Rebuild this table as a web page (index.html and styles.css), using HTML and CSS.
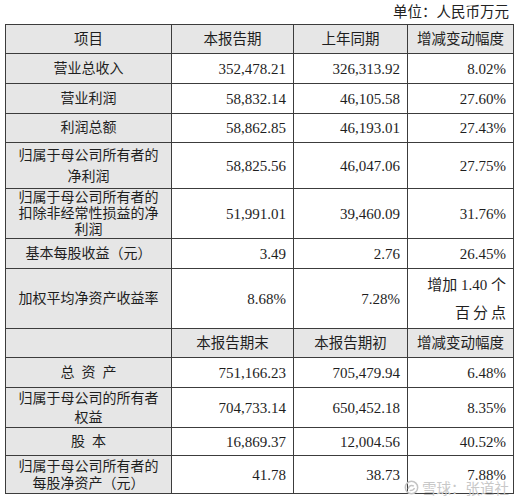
FILE: index.html
```html
<!DOCTYPE html>
<html lang="zh">
<head>
<meta charset="utf-8">
<link rel="stylesheet" href="styles.css">
</head>
<body>
<div class="page">
  <div class="unit">单位：人民币万元</div>
  <table class="fin">
    <colgroup>
      <col class="c1"><col class="c2"><col class="c3"><col class="c4">
    </colgroup>
    <tr class="head h29">
      <td class="ctr">项目</td>
      <td class="ctr">本报告期</td>
      <td class="ctr">上年同期</td>
      <td class="ctr">增减变动幅度</td>
    </tr>
    <tr class="h30">
      <td class="lab">营业总收入</td><td class="num">352,478.21</td><td class="num">326,313.92</td><td class="num">8.02%</td>
    </tr>
    <tr class="h30">
      <td class="lab">营业利润</td><td class="num">58,832.14</td><td class="num">46,105.58</td><td class="num">27.60%</td>
    </tr>
    <tr class="h29">
      <td class="lab">利润总额</td><td class="num">58,862.85</td><td class="num">46,193.01</td><td class="num">27.43%</td>
    </tr>
    <tr class="h46">
      <td class="lab lh21">归属于母公司所有者的<br>净利润</td><td class="num">58,825.56</td><td class="num">46,047.06</td><td class="num">27.75%</td>
    </tr>
    <tr class="h50">
      <td class="lab lh16">归属于母公司所有者的<br>扣除非经常性损益的净<br>利润</td><td class="num">51,991.01</td><td class="num">39,460.09</td><td class="num">31.76%</td>
    </tr>
    <tr class="h30">
      <td class="lab">基本每股收益（元）</td><td class="num">3.49</td><td class="num">2.76</td><td class="num">26.45%</td>
    </tr>
    <tr class="h60">
      <td class="lab">加权平均净资产收益率</td><td class="num">8.68%</td><td class="num">7.28%</td><td class="num lh28">增加 1.40 个<br><span class="spread">百分点</span></td>
    </tr>
    <tr class="head h29">
      <td></td>
      <td class="ctr">本报告期末</td>
      <td class="ctr">本报告期初</td>
      <td class="ctr">增减变动幅度</td>
    </tr>
    <tr class="h30">
      <td class="lab">总&nbsp;&nbsp;资&nbsp;&nbsp;产</td><td class="num">751,166.23</td><td class="num">705,479.94</td><td class="num">6.48%</td>
    </tr>
    <tr class="h40">
      <td class="lab lh19">归属于母公司的所有者<br>权益</td><td class="num">704,733.14</td><td class="num">650,452.18</td><td class="num">8.35%</td>
    </tr>
    <tr class="h28">
      <td class="lab">股&nbsp;&nbsp;本</td><td class="num">16,869.37</td><td class="num">12,004.56</td><td class="num">40.52%</td>
    </tr>
    <tr class="h38">
      <td class="lab lh17">归属于母公司所有者的<br>每股净资产（元）</td><td class="num">41.78</td><td class="num">38.73</td><td class="num">7.88%</td>
    </tr>
  </table>
  <div class="mark">
    <svg class="logo" width="15" height="15" viewBox="0 0 16 16">
      <circle cx="8" cy="8" r="6.6" fill="none" stroke="#c4c4c4" stroke-width="1.6"/>
      <path d="M4.5 9.5 C5 6 8 5 10.5 6.5 M6 11 C8 11.5 10.5 10.5 11.2 8.5" fill="none" stroke="#c4c4c4" stroke-width="1.5"/>
    </svg>
    <span>雪球：张道社</span>
  </div>
</div>
</body>
</html>
```

FILE: styles.css
```css
html, body {
  margin: 0;
  padding: 0;
  background: #ffffff;
}
body {
  font-family: "Liberation Serif", "Noto Sans CJK SC", serif;
  color: #1e1e1e;
  font-size: 15px;
}
.page {
  position: relative;
  width: 519px;
  height: 500px;
}
.unit {
  height: 24px;
  line-height: 25px;
  text-align: right;
  padding-right: 10px;
  font-size: 14.5px;
  color: #222;
}
.fin {
  margin-left: 5px;
  width: 508px;
  table-layout: fixed;
  border-collapse: collapse;
  border: 1.5px solid #3c3c3c;
}
.c1 { width: 166px; }
.c2 { width: 122px; }
.c3 { width: 114px; }
.c4 { width: 106px; }
.fin td {
  border: 1px solid #3c3c3c;
  padding: 0 7px 0 0;
  vertical-align: middle;
  white-space: nowrap;
  line-height: 16px;
  background: #ffffff;
}
.fin td.lab {
  background: #e6e6e6;
  text-align: center;
  padding: 0;
  font-size: 14px;
}
.fin tr.head td {
  background: #e6e6e6;
}
.fin td.ctr {
  text-align: center;
  padding: 0;
  font-size: 14.5px;
}
.fin td.num {
  text-align: right;
}
.h28 { height: 28px; }
.h29 { height: 29px; }
.h30 { height: 30px; }
.h38 { height: 38px; }
.h40 { height: 40px; }
.h46 { height: 46px; }
.h50 { height: 50px; }
.h60 { height: 60px; }
.fin td.lh16 { line-height: 16px; }
.fin td.lh17 { line-height: 17px; }
.fin td.lh19 { line-height: 19px; }
.fin td.lh21 { line-height: 21px; }
.fin td.lh28 { line-height: 28px; }
.spread { letter-spacing: 3px; margin-right: -3px; }
.mark {
  position: absolute;
  left: 404px;
  top: 477px;
  display: flex;
  align-items: center;
  gap: 3px;
  color: #c8c8c8;
  font-size: 14.5px;
  font-family: "Noto Sans CJK SC", sans-serif;
}
.logo { display: block; }
```
